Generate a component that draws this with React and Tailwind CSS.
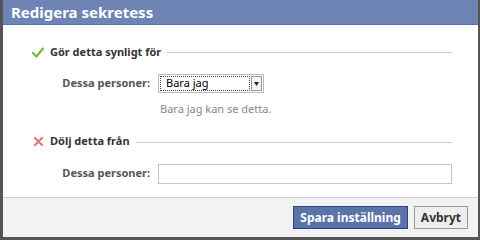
import React from 'react';

const font = { fontFamily: '"Noto Sans", "DejaVu Sans", sans-serif' };

const CheckIcon = () => (
  <svg width="12" height="11" viewBox="0 0 12 11" className="shrink-0">
    <path d="M1 6 L4.5 9.5 L11 1.5" fill="none" stroke="#74b84a" strokeWidth="2.2" strokeLinecap="round" strokeLinejoin="round" />
  </svg>
);

const CrossIcon = () => (
  <svg width="11" height="11" viewBox="0 0 11 11" className="shrink-0">
    <path d="M2 2 L9 9 M9 2 L2 9" fill="none" stroke="#e07a85" strokeWidth="2.4" strokeLinecap="round" />
  </svg>
);

// Section heading with icon and a rule that runs to the right edge
const SectionTitle = ({ icon, children }) => (
  <div className="flex items-center h-[14px]">
    <div className="w-[12px] flex justify-center">{icon}</div>
    <span className="ml-[6px] text-[11px] font-bold text-[#333]">{children}</span>
    <div className="flex-1 ml-[6px] h-px bg-[#ccc] mt-[1px]" />
  </div>
);

export default function App() {
  return (
    <div className="w-[480px] h-[240px] bg-[#545454] pl-[3px] pr-[2px] pb-[3px]" style={font}>
      <div className="flex flex-col h-full bg-white">
        <div className="h-[25px] bg-[#6d84b4] border-b border-[#5b72a5] flex items-center pl-[8px]">
          <span className="text-white text-[15px] font-bold">Redigera sekretess</span>
        </div>

        <div className="flex-1 pl-[29px] pr-[26px] pt-[20px]">
          <SectionTitle icon={<CheckIcon />}>Gör detta synligt för</SectionTitle>
          <div className="flex items-center mt-[15px]">
            <span className="w-[118px] text-right text-[11px] font-bold text-[#555]">Dessa personer:</span>
            <div className="ml-[8px] w-[106px] h-[19px] border border-[#bbb] flex items-center pl-[1px] pr-[1px] bg-white">
              <div className="flex-1 h-[15px] border border-dotted border-[#444] flex items-center pl-[5px] text-[11px] text-black">
                Bara jag
              </div>
              <div className="ml-[1px] w-[11px] h-[15px] border border-[#999] bg-[#f4f4f4] flex items-center justify-center">
                <svg width="5" height="4" viewBox="0 0 5 4"><path d="M0 0 H5 L2.5 4 Z" fill="#222" /></svg>
              </div>
            </div>
          </div>
          <div className="ml-[128px] mt-[8px] text-[11px] text-[#888]">Bara jag kan se detta.</div>

          <div className="mt-[17px]">
            <SectionTitle icon={<CrossIcon />}>Dölj detta från</SectionTitle>
          </div>
          <div className="flex items-center mt-[15px]">
            <span className="w-[118px] text-right text-[11px] font-bold text-[#555]">Dessa personer:</span>
            <div className="ml-[8px] flex-1 h-[20px] border border-[#bdc7d8] bg-white" />
          </div>
        </div>

        <div className="h-[40px] bg-[#f2f2f2] border-t border-[#ccc] flex items-center justify-end gap-[6px] pr-[10px]">
          <button className="h-[23px] px-[6px] bg-[#5b74a8] border border-[#29447e] text-white text-[12px] font-bold">
            Spara inställning
          </button>
          <button className="h-[23px] px-[6px] bg-[#eee] border border-[#999] text-[#333] text-[12px] font-bold">
            Avbryt
          </button>
        </div>
      </div>
    </div>
  );
}
